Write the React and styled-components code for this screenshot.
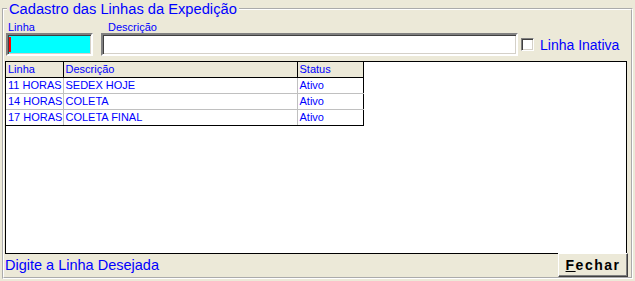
import styled, { createGlobalStyle } from "styled-components";

const GlobalStyle = createGlobalStyle`
body {
  margin: 0;
  background: #ece9d8;
  font-family: "Liberation Sans", Arial, sans-serif;
  color: #0000ff;
}
`;

const Frame = styled.fieldset`
  margin: 0 0 0 2px;
  width: 631px;
  height: 279px;
  box-sizing: border-box;
  border: 2px groove #fff;
  padding: 0;
  display: flex;
  flex-direction: column;
`;

const Legend = styled.legend`
  margin-left: 3px;
  padding: 0 2px;
  font-size: 14.7px;
  line-height: 18px;
  color: #0000ff;
`;

const TopRow = styled.div`
  display: flex;
  align-items: flex-end;
  padding: 3px 0 0 2px;
`;

const Field = styled.div`
  display: flex;
  flex-direction: column;
  margin-left: ${(p) => p.$gap || 0}px;
`;

const Label = styled.span`
  font-size: 11px;
  line-height: 12px;
  padding-left: ${(p) => p.$indent}px;
`;

const TextBox = styled.div`
  width: ${(p) => p.$w}px;
  height: 23px;
  box-sizing: border-box;
  background: ${(p) => p.$bg || "#fff"};
  border: 2px solid;
  border-color: #808080 #fff #fff #808080;
  box-shadow: inset 1px 1px 0 #404040, inset -1px -1px 0 #d4d0c8;
  padding: 2px 0 0 1px;
`;

const Caret = styled.span`
  display: block;
  width: 2px;
  height: 15px;
  background: #ff0000;
`;

const CheckWrap = styled.label`
  display: flex;
  align-items: center;
  height: 23px;
  margin-left: 3px;
  font-size: 14px;
  gap: 6px;
`;

const CheckBox = styled.span`
  width: 13px;
  height: 13px;
  box-sizing: border-box;
  background: #fff;
  border: 1px solid;
  border-color: #808080 #fff #fff #808080;
  box-shadow: inset 1px 1px 0 #404040, inset -1px -1px 0 #d4d0c8;
`;

const ListBox = styled.div`
  margin: 5px 0 0 1px;
  width: 622px;
  height: 196px;
  box-sizing: border-box;
  border: 1px solid #000;
  background: #fff;
`;

const Grid = styled.table`
  border-collapse: collapse;
  table-layout: fixed;
  width: 357px;
  font-size: 11px;
  color: #0000ff;
`;

const Col = styled.col`
  width: ${(p) => p.$w}px;
`;

const HeadCell = styled.th`
  height: 15px;
  line-height: 15px;
  padding: 0 0 0 2px;
  background: #ece9d8;
  font-weight: normal;
  text-align: left;
  border-right: 1px solid #000;
  border-bottom: 1px solid #000;
  white-space: nowrap;
  overflow: hidden;
`;

const Cell = styled.td`
  height: 15px;
  line-height: 15px;
  padding: 0 0 0 2px;
  border-right: 1px solid ${(p) => (p.$last ? "#000" : "#c0c0c0")};
  border-bottom: 1px solid ${(p) => (p.$end ? "#000" : "#c0c0c0")};
  white-space: nowrap;
  overflow: hidden;
  text-overflow: clip;
`;

const BottomRow = styled.div`
  display: flex;
  justify-content: space-between;
  align-items: flex-start;
  padding-left: 1px;
`;

const Status = styled.span`
  font-size: 14.5px;
  line-height: 16px;
  margin-top: 3px;
`;

const Button = styled.button`
  width: 70px;
  height: 24px;
  margin: -1px 3px 0 0;
  padding: 0;
  background: #ece9d8;
  border: 1px solid;
  border-color: #fff #404040 #404040 #fff;
  box-shadow: inset -1px -1px 0 #808080;
  font-family: "Liberation Sans", Arial, sans-serif;
  font-size: 14px;
  font-weight: bold;
  letter-spacing: 1.5px;
  color: #000;
  u { text-decoration: underline; }
`;

const rows = [
  ["11 HORAS", "SEDEX HOJE", "Ativo"],
  ["14 HORAS", "COLETA", "Ativo"],
  ["17 HORAS", "COLETA FINAL", "Ativo"],
];

export default function App() {
  return (
    <>
      <GlobalStyle />
      <Frame>
        <Legend>Cadastro das Linhas da Expedição</Legend>
        <TopRow>
          <Field>
            <Label $indent={2}>Linha</Label>
            <TextBox $w={87} $bg="#00ffff">
              <Caret />
            </TextBox>
          </Field>
          <Field $gap={8}>
            <Label $indent={7}>Descrição</Label>
            <TextBox $w={417} />
          </Field>
          <CheckWrap>
            <CheckBox />
            Linha Inativa
          </CheckWrap>
        </TopRow>
        <ListBox>
          <Grid>
            <colgroup>
              <Col $w={57} />
              <Col $w={234} />
              <Col $w={66} />
            </colgroup>
            <thead>
              <tr>
                <HeadCell>Linha</HeadCell>
                <HeadCell>Descrição</HeadCell>
                <HeadCell>Status</HeadCell>
              </tr>
            </thead>
            <tbody>
              {rows.map((r, i) => (
                <tr key={r[0]}>
                  <Cell $end={i === rows.length - 1}>{r[0]}</Cell>
                  <Cell $end={i === rows.length - 1}>{r[1]}</Cell>
                  <Cell $last $end={i === rows.length - 1}>{r[2]}</Cell>
                </tr>
              ))}
            </tbody>
          </Grid>
        </ListBox>
        <BottomRow>
          <Status>Digite a Linha Desejada</Status>
          <Button>
            <u>F</u>echar
          </Button>
        </BottomRow>
      </Frame>
    </>
  );
}
